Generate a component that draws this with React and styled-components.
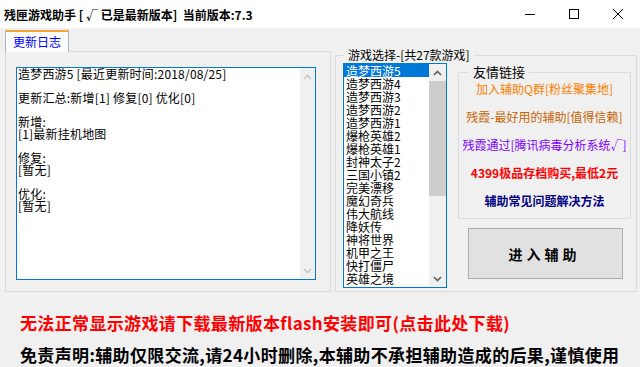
import React from 'react';
import styled, { createGlobalStyle } from 'styled-components';

const GlobalStyle = createGlobalStyle`
  html, body {
    margin: 0;
    padding: 0;
  }
  body {
    width: 640px;
    height: 367px;
    overflow: hidden;
    background: #f0f0f0;
    font-family: "Noto Sans CJK SC", "Liberation Sans", sans-serif;
    color: #000;
  }
`;

const Window = styled.div`
  width: 640px;
  height: 367px;
  background: #f0f0f0;
  display: flex;
  flex-direction: column;
`;

const TitleBar = styled.div`
  height: 28px;
  background: #fff;
  display: flex;
  align-items: center;
`;

const Title = styled.div`
  flex: 1;
  padding-left: 4px;
  font-size: 12px;
  font-weight: 700;
  white-space: pre;
`;

const Ctrl = styled.div`
  width: 44px;
  height: 28px;
  display: flex;
  align-items: center;
  justify-content: center;
`;

const Main = styled.div`
  display: flex;
  gap: 4px;
  padding: 0 3px 0 5px;
  margin-top: 2px;
  height: 262px;
`;

const LeftPanel = styled.div`
  width: 326px;
  display: flex;
  flex-direction: column;
`;

const Tab = styled.div`
  width: 64px;
  height: 22px;
  box-sizing: border-box;
  border-top: 2px solid #f7a536;
  border-left: 1px solid #a9b6c4;
  border-right: 1px solid #a9b6c4;
  background: #fbfcfe;
  color: #0000ff;
  font-size: 12px;
  line-height: 20px;
  text-align: center;
  margin-bottom: -1px;
  position: relative;
  z-index: 1;
`;

const Pane = styled.div`
  flex: 1;
  border: 1px solid #d9d9d9;
  padding: 15px 0 0 10px;
`;

const TextBox = styled.div`
  width: 300px;
  height: 213px;
  box-sizing: border-box;
  border: 1px solid #0078d7;
  background: #fff;
  display: flex;
`;

const TextBody = styled.div`
  flex: 1;
  padding: 0 1px;
  font-size: 12px;
  line-height: 12px;
  white-space: pre;
  letter-spacing: 0.2px;
`;

const ScrollCol = styled.div`
  width: ${p => p.$w}px;
  background: #f0f0f0;
  display: flex;
  flex-direction: column;
  justify-content: space-between;
  align-items: center;
`;

const ArrowBtn = styled.div`
  height: 17px;
  width: 100%;
  display: flex;
  align-items: center;
  justify-content: center;
`;

const Thumb = styled.div`
  width: 100%;
  height: 115px;
  background: #cdcdcd;
`;

const Track = styled.div`
  flex: 1;
  width: 100%;
`;

const Group = styled.fieldset`
  margin: ${p => p.$mt}px 0 0 0;
  padding: ${p => p.$pad};
  border: 1px solid #dcdcdc;
  box-sizing: border-box;
  min-width: 0;
`;

const Legend = styled.legend`
  padding: 0 4px;
  margin-left: ${p => p.$ml}px;
  font-size: ${p => p.$fs}px;
  line-height: ${p => p.$lh}px;
`;

const GameGroup = styled(Group)`
  width: 302px;
  height: 244px;
  display: flex;
`;

const GameInner = styled.div`
  display: flex;
  gap: 11px;
`;

const ListBox = styled.div`
  width: 104px;
  height: 225px;
  box-sizing: border-box;
  border: 1px solid #0078d7;
  background: #fff;
  display: flex;
`;

const Items = styled.div`
  flex: 1;
`;

const Item = styled.div`
  height: 13px;
  line-height: 13px;
  font-size: 12px;
  padding-left: 2px;
  white-space: nowrap;
  background: ${p => (p.$sel ? '#0078d7' : 'transparent')};
  color: ${p => (p.$sel ? '#fff' : '#000')};
`;

const RightCol = styled.div`
  display: flex;
  flex-direction: column;
  width: 173px;
`;

const LinkGroup = styled(Group)`
  width: 173px;
  display: flex;
  flex-direction: column;
  align-items: center;
  gap: 12px;
`;

const LinkText = styled.div`
  font-size: 12px;
  line-height: 16px;
  white-space: nowrap;
  color: ${p => p.$color};
  font-weight: ${p => (p.$bold ? 700 : 400)};
`;

const EnterButton = styled.button`
  margin: 9px 0 0 10px;
  width: 155px;
  height: 51px;
  background: #e1e1e1;
  border: 1px solid #adadad;
  font-family: inherit;
  font-size: 14px;
  font-weight: 700;
  letter-spacing: 4px;
  padding-left: 4px;
  color: #000;
`;

const Notes = styled.div`
  padding: 21px 0 0 20px;
  display: flex;
  flex-direction: column;
  gap: 12px;
`;

const Note = styled.div`
  font-size: 17px;
  line-height: 20px;
  font-weight: 700;
  letter-spacing: 0.35px;
  white-space: nowrap;
  color: ${p => p.$color};
`;

const Chevron = ({ up, color }) => (
  <svg width="9" height="6" viewBox="0 0 9 6">
    <path
      d={up ? 'M1 5 L4.5 1.5 L8 5' : 'M1 1 L4.5 4.5 L8 1'}
      fill="none"
      stroke={color}
      strokeWidth="1.6"
    />
  </svg>
);

const log = `造梦西游5 [最近更新时间:2018/08/25]

更新汇总:新增[1] 修复[0] 优化[0]

新增:
[1]最新挂机地图

修复:
[暂无]

优化:
[暂无]`;

const games = [
  '造梦西游5', '造梦西游4', '造梦西游3', '造梦西游2', '造梦西游1',
  '爆枪英雄2', '爆枪英雄1', '封神太子2', '三国小镇2', '完美漂移',
  '魔幻奇兵', '伟大航线', '降妖传', '神将世界', '机甲之王',
  '快打僵尸', '英雄之境',
];

const links = [
  { text: '加入辅助Q群[粉丝聚集地]', color: '#ff8000' },
  { text: '残霞-最好用的辅助[值得信赖]', color: '#c86400' },
  { text: '残霞通过[腾讯病毒分析系统√]', color: '#8000ff' },
  { text: '4399极品存档购买,最低2元', color: '#ff0000', bold: true },
  { text: '辅助常见问题解决方法', color: '#000080', bold: true },
];

export default function App() {
  return (
    <Window>
      <GlobalStyle />
      <TitleBar>
        <Title>残匣游戏助手 [ √ 已是最新版本]  当前版本:7.3</Title>
        <Ctrl>
          <svg width="10" height="10" viewBox="0 0 10 10">
            <path d="M0 5.5 H10" stroke="#000" strokeWidth="1" />
          </svg>
        </Ctrl>
        <Ctrl>
          <svg width="10" height="10" viewBox="0 0 10 10">
            <rect x="0.5" y="0.5" width="9" height="9" fill="none" stroke="#000" strokeWidth="1" />
          </svg>
        </Ctrl>
        <Ctrl>
          <svg width="10" height="10" viewBox="0 0 10 10">
            <path d="M0 0 L10 10 M10 0 L0 10" stroke="#000" strokeWidth="1" />
          </svg>
        </Ctrl>
      </TitleBar>

      <Main>
        <LeftPanel>
          <Tab>更新日志</Tab>
          <Pane>
            <TextBox>
              <TextBody>{log}</TextBody>
              <ScrollCol $w={15}>
                <ArrowBtn><Chevron up color="#c8c8c8" /></ArrowBtn>
                <ArrowBtn><Chevron color="#c8c8c8" /></ArrowBtn>
              </ScrollCol>
            </TextBox>
          </Pane>
        </LeftPanel>

        <GameGroup $mt={18} $pad="1px 7px 3px 7px">
          <Legend $ml={1} $fs={12} $lh={14}>游戏选择-[共27款游戏]</Legend>
          <GameInner>
            <ListBox>
              <Items>
                {games.map((g, i) => (
                  <Item key={g} $sel={i === 0}>{g}</Item>
                ))}
              </Items>
              <ScrollCol $w={17}>
                <ArrowBtn><Chevron up color="#606060" /></ArrowBtn>
                <Thumb />
                <Track />
                <ArrowBtn><Chevron color="#606060" /></ArrowBtn>
              </ScrollCol>
            </ListBox>
            <RightCol>
              <LinkGroup $mt={1} $pad="1px 0 9px 0">
                <Legend $ml={10} $fs={13} $lh={16}>友情链接</Legend>
                {links.map(l => (
                  <LinkText key={l.text} $color={l.color} $bold={l.bold}>{l.text}</LinkText>
                ))}
              </LinkGroup>
              <EnterButton>进入辅助</EnterButton>
            </RightCol>
          </GameInner>
        </GameGroup>
      </Main>

      <Notes>
        <Note $color="#ff0000">无法正常显示游戏请下载最新版本flash安装即可(点击此处下载)</Note>
        <Note $color="#000">免责声明:辅助仅限交流,请24小时删除,本辅助不承担辅助造成的后果,谨慎使用</Note>
      </Notes>
    </Window>
  );
}
